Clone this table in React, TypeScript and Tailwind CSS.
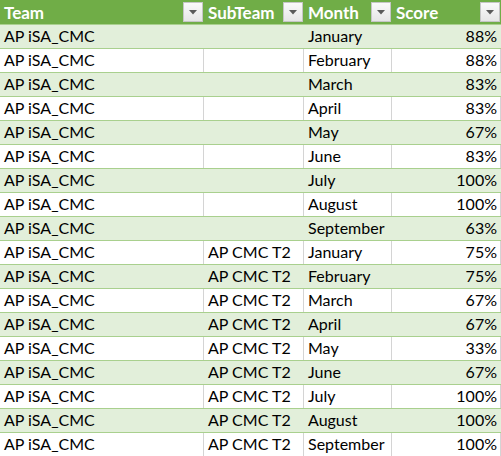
const rows: [string, string, string, string][] = [
  ['AP iSA_CMC', '', 'January', '88%'],
  ['AP iSA_CMC', '', 'February', '88%'],
  ['AP iSA_CMC', '', 'March', '83%'],
  ['AP iSA_CMC', '', 'April', '83%'],
  ['AP iSA_CMC', '', 'May', '67%'],
  ['AP iSA_CMC', '', 'June', '83%'],
  ['AP iSA_CMC', '', 'July', '100%'],
  ['AP iSA_CMC', '', 'August', '100%'],
  ['AP iSA_CMC', '', 'September', '63%'],
  ['AP iSA_CMC', 'AP CMC T2', 'January', '75%'],
  ['AP iSA_CMC', 'AP CMC T2', 'February', '75%'],
  ['AP iSA_CMC', 'AP CMC T2', 'March', '67%'],
  ['AP iSA_CMC', 'AP CMC T2', 'April', '67%'],
  ['AP iSA_CMC', 'AP CMC T2', 'May', '33%'],
  ['AP iSA_CMC', 'AP CMC T2', 'June', '67%'],
  ['AP iSA_CMC', 'AP CMC T2', 'July', '100%'],
  ['AP iSA_CMC', 'AP CMC T2', 'August', '100%'],
  ['AP iSA_CMC', 'AP CMC T2', 'September', '100%'],
];

const FilterButton = () => (
  <div className="mr-[1px] flex h-[20px] w-[20px] shrink-0 items-center justify-center border border-[#c6c6c6] bg-gradient-to-b from-[#fafafa] to-[#e6e6e6]">
    <svg width="8" height="5" viewBox="0 0 8 5">
      <path d="M0 0h8L4 4.5z" fill="#5a5a5a" />
    </svg>
  </div>
);

const HeaderCell = ({ label, width }: { label: string; width: string }) => (
  <div className={`${width} flex h-full items-center justify-between pl-[4px]`}>
    <span className="text-[17px] font-bold text-white">{label}</span>
    <FilterButton />
  </div>
);

export default function App() {
  return (
    <div className="w-[501px] bg-white text-[16px] leading-none text-black" style={{ fontFamily: 'Lato, "Open Sans", sans-serif' }}>
      <div className="flex h-[24px] bg-[#70ad47]">
        <HeaderCell label="Team" width="w-[204px]" />
        <HeaderCell label="SubTeam" width="w-[100px]" />
        <HeaderCell label="Month" width="w-[88px]" />
        <HeaderCell label="Score" width="w-[109px]" />
      </div>
      {rows.map(([team, sub, month, score], i) => {
        const striped = i % 2 === 0;
        const line = striped ? 'border-transparent' : 'border-[#d4d4d4]';
        return (
          <div key={i} className={`flex h-[24px] border-t border-[#a9d08e] ${striped ? 'bg-[#e2efda]' : 'bg-white'}`}>
            <div className={`flex w-[204px] items-end border-r pb-[4px] pl-[4px] ${line}`}>{team}</div>
            <div className={`flex w-[100px] items-end border-r pb-[4px] pl-[4px] ${line}`}>{sub}</div>
            <div className={`flex w-[88px] items-end border-r pb-[4px] pl-[4px] ${line}`}>{month}</div>
            <div className={`flex w-[109px] items-end justify-end border-r pb-[4px] pr-[3px] ${line}`}>{score}</div>
          </div>
        );
      })}
    </div>
  );
}
